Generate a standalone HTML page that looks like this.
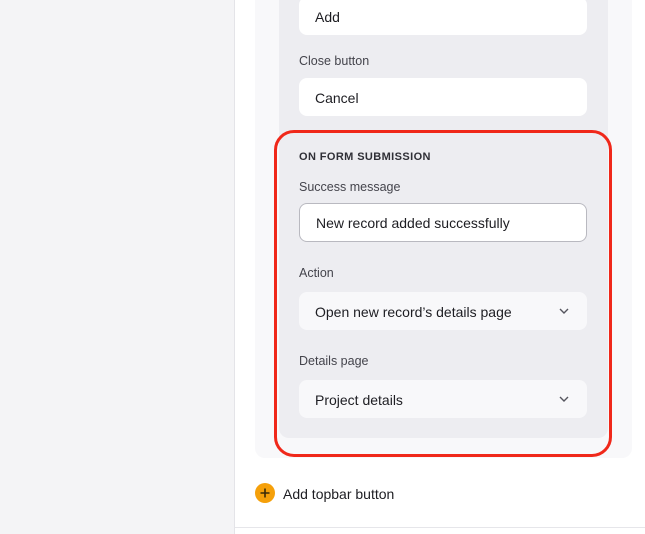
<!DOCTYPE html><html><head><style>
body{margin:0;width:645px;height:534px;overflow:hidden;background:#fff;font-family:"Liberation Sans",sans-serif;position:relative}
.a{position:absolute}
.inp{position:absolute;left:299px;width:288px;height:38px;border-radius:8px;box-sizing:border-box;font-size:14px;color:#1d1d22;line-height:40px;padding-left:16px}
.lbl{position:absolute;left:299px;font-size:12.5px;color:#44444c}
.chev{position:absolute;right:18px;top:15px}
</style></head><body>
<div class="a" style="left:0;top:0;width:234px;height:534px;background:#f4f4f6;border-right:1px solid #e4e4e8"></div>
<div class="a" style="left:235px;top:527px;width:410px;height:1px;background:#e6e6ea"></div>
<div class="a" style="left:255px;top:-20px;width:377px;height:478px;background:#f8f8fa;border-radius:10px"></div>
<div class="a" style="left:279px;top:-20px;width:329px;height:458px;background:#ededf1;border-radius:10px"></div>
<div class="inp" style="top:-3px;background:#fff">Add</div>
<div class="lbl" style="top:54px">Close button</div>
<div class="inp" style="top:78px;background:#fff">Cancel</div>
<div class="a" style="left:274px;top:130px;width:338px;height:327px;box-sizing:border-box;border:3px solid #f0281a;border-radius:20px"></div>
<div class="lbl" style="top:151px;font-size:11px;font-weight:bold;letter-spacing:0.4px;color:#2f2f36">ON FORM SUBMISSION</div>
<div class="lbl" style="top:180px">Success message</div>
<div class="inp" style="top:203px;height:39px;background:#fff;border:1px solid #b9b9c0;padding-left:16px;line-height:38px">New record added successfully</div>
<div class="lbl" style="top:266px">Action</div>
<div class="inp" style="top:292px;background:#f8f8fa">Open new record’s details page<svg class="chev" width="10" height="8" viewBox="0 0 10 8"><path d="M1 2l4 4 4-4" fill="none" stroke="#55555e" stroke-width="1.4"/></svg></div>
<div class="lbl" style="top:354px">Details page</div>
<div class="inp" style="top:380px;background:#f8f8fa">Project details<svg class="chev" width="10" height="8" viewBox="0 0 10 8"><path d="M1 2l4 4 4-4" fill="none" stroke="#55555e" stroke-width="1.4"/></svg></div>
<svg class="a" style="left:255px;top:483px" width="20" height="20" viewBox="0 0 20 20"><circle cx="10" cy="10" r="10" fill="#f5a00a"/><path d="M10 5.5v9M5.5 10h9" stroke="#3a2a08" stroke-width="1.6"/></svg>
<div class="a" style="left:283px;top:486px;font-size:14px;color:#1d1d22">Add topbar button</div>
</body></html>
